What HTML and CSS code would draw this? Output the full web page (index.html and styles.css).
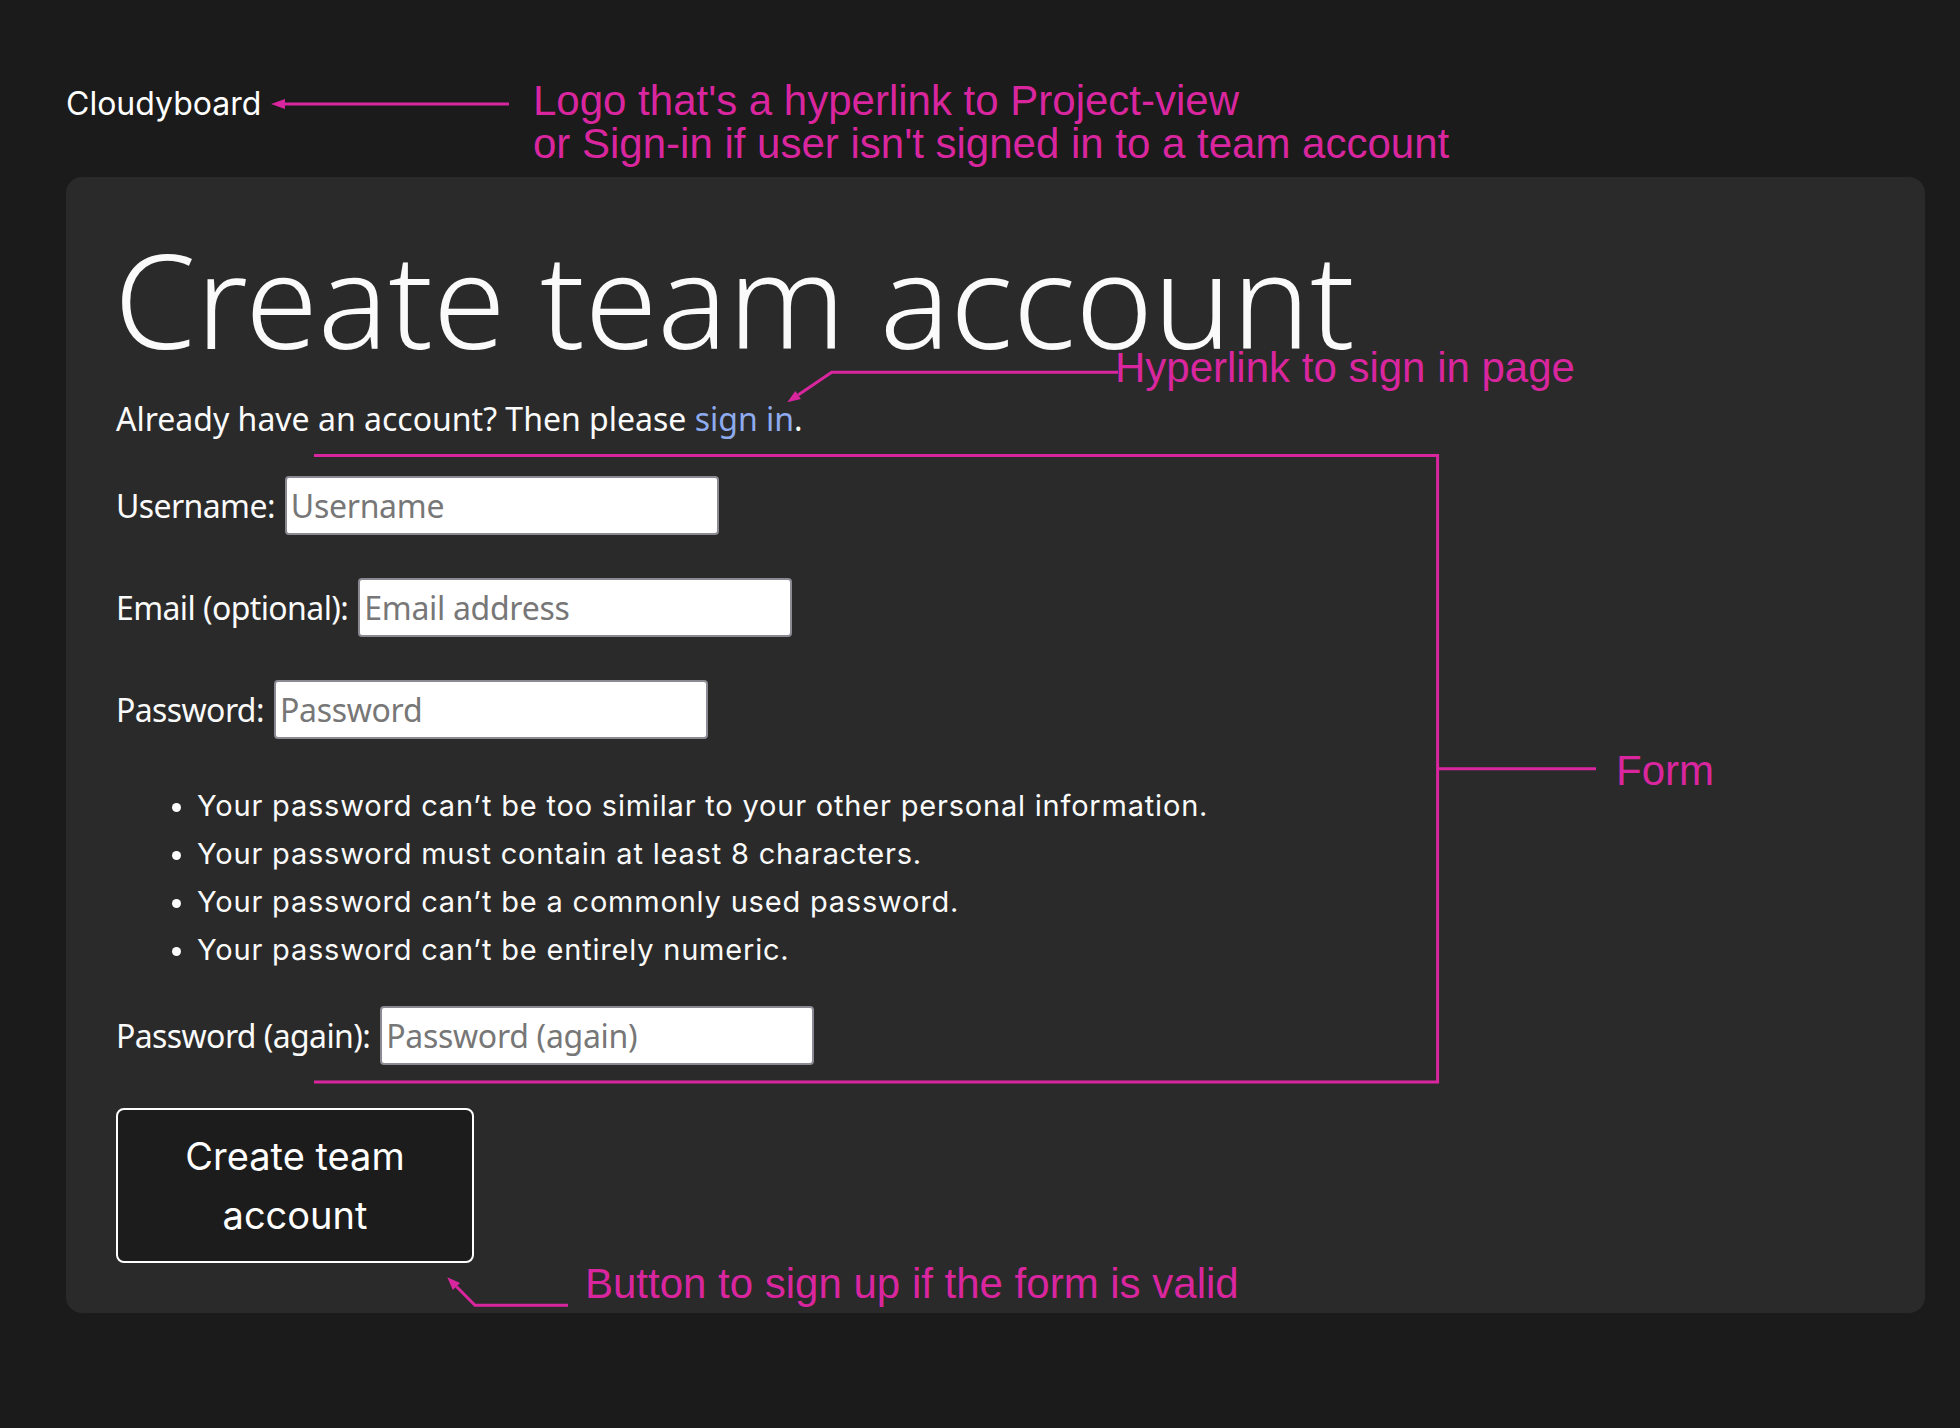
FILE: index.html
```html
<!DOCTYPE html>
<html lang="en">
<head>
<meta charset="utf-8">
<title>Create team account – Cloudyboard</title>
<link rel="stylesheet" href="styles.css">
</head>
<body>
<div class="page">
  <header class="topbar">
    <a class="logo" href="#">Cloudyboard</a>
  </header>

  <main class="card">
    <h1 class="title">Create team account</h1>
    <p class="lead">Already have an account? Then please <a class="link" href="#">sign in</a>.</p>

    <form class="signup">
      <div class="field field-first">
        <label class="label" for="username">Username:</label>
        <input class="input" id="username" type="text" placeholder="Username">
      </div>
      <div class="field">
        <label class="label" for="email">Email (optional):</label>
        <input class="input" id="email" type="email" placeholder="Email address">
      </div>
      <div class="field">
        <label class="label" for="password1">Password:</label>
        <input class="input" id="password1" type="password" placeholder="Password">
      </div>
      <ul class="rules">
        <li>Your password can’t be too similar to your other personal information.</li>
        <li>Your password must contain at least 8 characters.</li>
        <li>Your password can’t be a commonly used password.</li>
        <li>Your password can’t be entirely numeric.</li>
      </ul>
      <div class="field field-again">
        <label class="label" for="password2">Password (again):</label>
        <input class="input" id="password2" type="password" placeholder="Password (again)">
      </div>
      <button class="submit" type="submit">Create team account</button>
    </form>
  </main>

  <div class="annotations" aria-hidden="true">
    <svg class="ann-lines" width="1960" height="1428" viewBox="0 0 1960 1428">
      <g fill="none" stroke="#d9269f" stroke-width="3">
        <line x1="282" y1="104" x2="509" y2="104"/>
        <polyline points="1118,372.3 831.7,372.3 798.1,395"/>
        <polyline points="314,455.5 1437.6,455.5 1437.6,1082 314,1082"/>
        <line x1="1437.6" y1="768.7" x2="1596" y2="768.7"/>
        <polyline points="568,1305.3 475,1305.3 456.4,1286.5"/>
      </g>
      <g fill="#d9269f">
        <polygon points="271,104 285,99 285,109"/>
        <polygon points="787.3,402.3 800.9,399.1 795.3,390.9"/>
        <polygon points="447.3,1277.3 460,1283 452.8,1290"/>
      </g>
    </svg>
    <div class="note note-logo">Logo that's a hyperlink to Project-view<br>or Sign-in if user isn't signed in to a team account</div>
    <div class="note note-link">Hyperlink to sign in page</div>
    <div class="note note-form">Form</div>
    <div class="note note-button">Button to sign up if the form is valid</div>
  </div>
</div>
</body>
</html>
```
FILE: styles.css
```css
html, body {
  margin: 0;
  padding: 0;
  background: #1b1b1b;
  color: #fafafa;
}

body {
  font-family: "Noto Sans", "Open Sans", sans-serif;
  font-size: 32px;
  line-height: 48px;
}

.page {
  position: relative;
  width: 1960px;
  min-height: 1428px;
  box-sizing: border-box;
  padding: 0 35px 0 66px;
}

/* header */
.topbar {
  padding-top: 79px;
  margin-bottom: 59px;
  height: 39px;
}

.logo {
  font-family: "Inter", "Liberation Sans", sans-serif;
  font-size: 32px;
  line-height: 39px;
  color: #ffffff;
  text-decoration: none;
}

/* card */
.card {
  background: #2a2a2a;
  border-radius: 16px;
  padding: 67px 50px 50px;
}

.title {
  margin: 0 0 0 -2px;
  font-family: "Noto Sans", sans-serif;
  font-weight: 300;
  font-size: 131.6px;
  line-height: 108px;
  color: #fafafa;
}

.lead {
  margin: 43px 0 0;
}

.link {
  color: #8eabef;
  text-decoration: none;
}

/* form */
.signup {
  display: flex;
  flex-direction: column;
  align-items: flex-start;
}

.field {
  display: flex;
  align-items: center;
  gap: 10px;
  height: 59px;
  margin-top: 43px;
}

.field-first {
  margin-top: 33px;
}

.field-again {
  margin-top: 32px;
}

.label {
  white-space: nowrap;
  letter-spacing: -0.6px;
}

.input {
  box-sizing: border-box;
  width: 434px;
  height: 59px;
  margin: 0;
  padding: 0 6px 0 4px;
  background: #ffffff;
  border: 2px solid #8a8a93;
  border-radius: 4px;
  font-family: "Noto Sans", sans-serif;
  font-size: 32px;
  letter-spacing: -0.3px;
  color: #222;
  outline: none;
}

.input::placeholder {
  color: #777777;
  opacity: 1;
}

.rules {
  margin: 43px 0 0;
  padding-left: 81px;
  font-family: "Inter", "Liberation Sans", sans-serif;
  font-size: 29px;
  line-height: 48px;
  letter-spacing: 0.8px;
}

.submit {
  box-sizing: border-box;
  width: 358px;
  height: 155px;
  margin-top: 43px;
  padding: 0 30px;
  background: #1c1c1c;
  border: 2px solid #ffffff;
  border-radius: 8px;
  color: #ffffff;
  font-family: "Inter", "Liberation Sans", sans-serif;
  font-size: 38px;
  line-height: 59px;
  text-align: center;
  cursor: pointer;
}

/* annotation layer */
.annotations {
  position: absolute;
  left: 0;
  top: 0;
  width: 1960px;
  height: 1428px;
  pointer-events: none;
}

.ann-lines {
  position: absolute;
  left: 0;
  top: 0;
}

.note {
  position: absolute;
  font-family: "Liberation Sans", Arial, sans-serif;
  font-size: 42px;
  line-height: 43px;
  color: #d9269f;
  white-space: nowrap;
}

.note-logo {
  left: 533px;
  top: 79px;
}

.note-link {
  left: 1115px;
  top: 353px;
  line-height: 30px;
}

.note-form {
  left: 1616px;
  top: 749px;
}

.note-button {
  left: 585px;
  top: 1262px;
}
```
